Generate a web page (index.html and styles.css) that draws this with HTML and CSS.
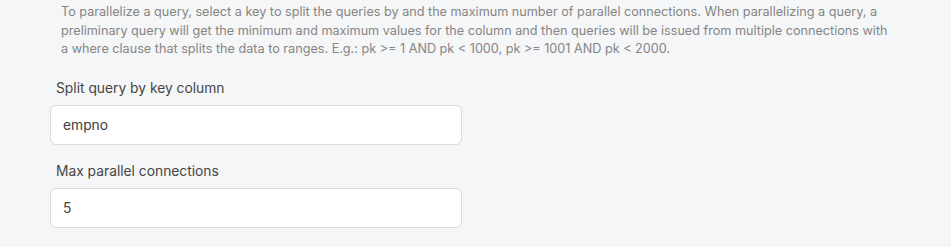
FILE: index.html
```html
<!DOCTYPE html>
<html lang="en">
<head>
    <meta charset="UTF-8">
    <title>Parallel Query</title>
    <link rel="stylesheet" href="styles.css">
</head>
<body>
    <div class="panel">
        <p class="hint">To parallelize a query, select a key to split the queries by and the maximum number of parallel connections. When parallelizing a query, a preliminary query will get the minimum and maximum values for the column and then queries will be issued from multiple connections with a where clause that splits the data to ranges. E.g.: pk &gt;= 1 AND pk &lt; 1000, pk &gt;= 1001 AND pk &lt; 2000.</p>

        <div class="field">
            <label for="splitKey">Split query by key column</label>
            <input type="text" id="splitKey" value="empno">
        </div>

        <div class="field">
            <label for="maxConn">Max parallel connections</label>
            <input type="text" id="maxConn" value="5">
        </div>
    </div>
</body>
</html>
```

FILE: styles.css
```css
* { box-sizing: border-box; font-family: 'Inter', 'Liberation Sans', sans-serif; }
body { margin: 0; padding: 0; background-color: #f5f6f7; }
.panel { padding: 3px 0 0 50px; }
.hint { margin: 0 0 0 11px; width: 835px; font-size: 12.65px; line-height: 18.5px; color: #858585; }
.field { width: 412px; margin-top: 21px; }
.field + .field { margin-top: 18px; }
.field label { display: block; padding-left: 6px; font-size: 13.8px; line-height: 17px; color: #454545; margin-bottom: 8px; }
.field input { width: 100%; height: 40px; padding: 0 12px; border: 1px solid #dadada; border-radius: 6px; background: white; font-size: 13.8px; color: #3c3c3c; }
```
